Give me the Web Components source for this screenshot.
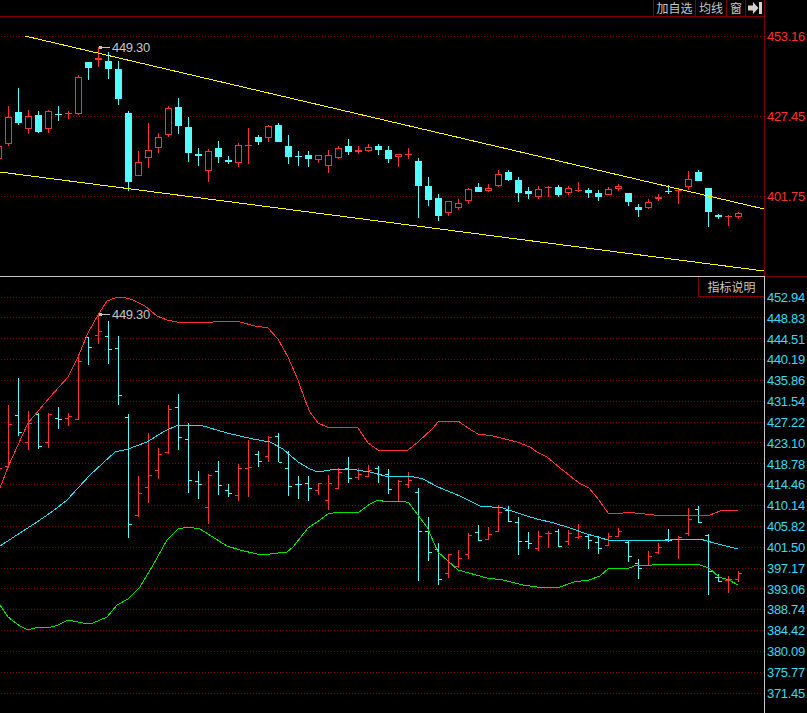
<!DOCTYPE html>
<html>
<head>
<meta charset="utf-8">
<title>K线</title>
<style>
  html, body { margin: 0; background: #000; }
</style>
</head>
<body>
<kline-window>
  <candle-pane slot="upper"></candle-pane>
  <price-axis slot="upper-axis" tone="red" top="28" gap="64" values="453.16 427.45 401.75"></price-axis>
  <bar-pane slot="lower"></bar-pane>
  <price-axis slot="lower-axis" tone="cyan" top="12.5" gap="4.84" values="452.94 448.83 444.51 440.19 435.86 431.54 427.22 423.10 418.78 414.46 410.14 405.82 401.50 397.17 393.06 388.74 384.42 380.09 375.77 371.45"></price-axis>
</kline-window>

<script>
const RED = '#ff3232';
const CYAN = '#54fcfc';
const GRID = '#800000';
const SVG_NS = 'http://www.w3.org/2000/svg';

// c: x centre, color, high, low, body top, body bottom (page pixels)
const CANDLES = [
  [-2,'r',140,165,146,159],[8,'r',106,146,117,144],[18,'c',88,125,112,123],[28,'r',110,134,116,129],
  [38,'c',111,133,115,132],[48,'r',110,133,111,129],[58,'c',106,121,114,115],[68,'r',111,119,113,114],
  [78,'r',75,115,77,114],[88,'c',62,80,62,68],[98,'r',47,67,58,60],[108,'c',52,79,61,69],
  [118,'c',61,105,69,99],[128,'c',111,191,113,182],[138,'r',151,176,162,176],[148,'r',123,168,150,158],
  [158,'r',133,153,137,148],[168,'r',106,137,108,135],[178,'c',98,134,107,126],[188,'c',117,162,127,153],
  [198,'c',148,166,154,156],[208,'r',149,182,151,171],[218,'c',141,163,148,157],[228,'c',156,164,160,162],
  [238,'r',143,167,145,163],[248,'r',128,164,145,146],[258,'c',135,145,137,142],[268,'r',125,142,126,138],
  [278,'c',123,142,125,142],[288,'c',135,164,146,157],[298,'c',151,166,156,157],[308,'c',151,167,155,159],
  [318,'r',155,163,155,160],[328,'r',150,173,155,166],[338,'r',146,159,148,158],[348,'c',139,155,146,152],
  [358,'r',146,154,150,152],[368,'r',144,152,147,151],[378,'c',144,155,146,150],[388,'c',146,163,150,159],
  [398,'r',154,167,154,157],[408,'r',148,159,154,155],[418,'c',158,218,161,186],[428,'c',177,206,186,200],
  [438,'c',194,221,198,216],[448,'r',201,216,201,213],[458,'r',199,210,203,208],[468,'r',188,204,189,201],
  [478,'c',183,192,187,192],[488,'r',184,192,188,191],[498,'r',170,187,174,186],[508,'c',170,181,172,180],
  [518,'c',177,202,180,193],[528,'c',187,199,191,194],[538,'r',186,199,189,197],[548,'r',186,197,187,188],
  [558,'c',185,197,187,195],[568,'r',186,195,188,193],[578,'r',182,192,190,191],[588,'c',188,198,190,193],
  [598,'c',190,201,193,197],[608,'r',187,195,189,195],[618,'r',184,191,186,189],[628,'c',193,206,193,202],
  [638,'c',204,217,207,210],[648,'r',199,209,202,208],[658,'r',194,201,197,199],[668,'c',185,194,191,192],
  [678,'r',189,204,190,191],[688,'r',171,190,179,187],[698,'c',170,181,172,181],[708,'c',188,227,188,212],
  [718,'c',214,219,215,217],[728,'r',215,226,216,217],[738,'r',212,219,213,217]
];

// c: x centre, color, high, low, open tick, close tick
const BARS = [
  [-2,'r',440,500,468,468],[8,'r',405,468,466,424],[18,'c',378,436,415,432],[28,'r',411,450,442,423],
  [38,'c',413,449,414,446],[48,'r',413,448,442,414],[58,'c',407,429,418,419],[68,'r',413,426,418,416],
  [78,'r',356,420,419,361],[88,'c',337,365,337,347],[98,'r',314,344,335,331],[108,'c',321,364,336,349],
  [118,'c',336,405,348,395],[128,'c',414,538,417,524],[138,'r',476,517,515,493],[148,'r',433,503,487,475],
  [158,'r',448,479,470,454],[168,'r',405,454,452,409],[178,'c',394,450,407,437],[188,'c',423,493,439,480],
  [198,'c',471,499,481,484],[208,'r',474,524,507,475],[218,'c',461,495,471,485],[228,'c',484,497,490,493],
  [238,'r',464,501,495,468],[248,'r',440,497,468,467],[258,'c',451,467,454,461],[268,'r',436,462,456,437],
  [278,'c',433,462,436,462],[288,'c',451,496,468,486],[298,'c',476,499,484,484],[308,'c',476,501,483,488],
  [318,'r',483,495,490,483],[328,'r',475,510,500,483],[338,'r',468,489,488,472],[348,'c',457,483,468,478],
  [358,'r',468,480,477,474],[368,'r',465,477,476,470],[378,'c',466,483,468,474],[388,'c',469,494,474,489],
  [398,'r',480,501,501,481],[408,'r',472,488,484,480],[418,'c',488,581,492,531],[428,'c',517,561,531,552],
  [438,'c',543,585,549,579],[448,'r',554,578,573,554],[458,'r',550,568,566,558],[468,'r',533,559,554,535],
  [478,'c',525,541,532,540],[488,'r',527,540,539,534],[498,'r',505,532,531,512],[508,'c',506,522,510,521],
  [518,'c',517,555,522,541],[528,'c',532,549,541,543],[538,'r',531,551,548,536],[548,'r',531,548,533,533],
  [558,'c',529,547,531,546],[568,'r',530,545,541,533],[578,'r',524,539,537,536],[588,'c',534,549,536,540],
  [598,'c',536,554,542,548],[608,'r',533,546,545,536],[618,'r',528,537,536,531],[628,'c',541,562,542,556],
  [638,'c',559,579,563,568],[648,'r',551,566,565,556],[658,'r',543,554,552,547],[668,'c',529,542,539,540],
  [678,'r',536,559,539,537],[688,'r',508,536,533,519],[698,'c',506,523,509,522],[708,'c',534,595,535,571],
  [718,'c',574,582,577,581],[728,'r',576,593,580,579],[738,'r',571,582,579,573]
];

const UPPER_BAND = '0,488 8,467 28,423 50,397 68,377 78,357 88,333 98,315 107,301 115,298 123,297 133,300 145,306 157,316 167,320 177,322 213,322 223,321 240,322 255,326 268,328 278,339 288,357 298,380 305,400 310,412 318,423 327,427 358,428 368,443 378,450 408,450 418,442 433,428 438,422 458,421 468,428 478,434 493,436 517,442 530,447 537,452 547,457 560,468 579,483 589,488 599,500 608,513 623,513 629,512 635,513 654,515 680,515 710,515 720,511 729,510 738,511';
const MID_BAND = '0,546 20,533 37,522 53,511 67,500 90,475 115,452 128,449 147,442 163,432 178,425 200,425 227,433 253,439 270,442 283,449 298,462 310,469 318,472 330,470 350,469 370,472 385,476 410,476 423,479 438,487 460,496 480,506 503,508 527,516 537,519 554,523 570,528 587,534 608,540 670,540 700,539 714,543 738,549';
const LOW_BAND = '0,605 8,617 20,626 28,630 38,627 48,628 58,625 68,620 83,623 93,623 107,617 117,605 128,599 140,587 152,567 167,540 178,529 188,527 200,529 227,546 240,550 257,554 270,554 287,552 293,547 308,528 317,522 328,514 338,512 358,513 370,504 378,500 387,502 403,501 409,503 418,515 427,527 438,552 458,570 487,578 503,580 523,585 537,587 560,587 574,582 589,580 600,576 609,568 629,568 637,565 647,566 657,564 684,565 697,564 709,568 719,577 729,580 738,585';

function svgEl(name, attrs, text) {
  const el = document.createElementNS(SVG_NS, name);
  for (const k in attrs) el.setAttribute(k, attrs[k]);
  if (text) el.textContent = text;
  return el;
}

function box(svg, x, y, w, h, fill) {
  svg.appendChild(svgEl('rect', { x, y, width: w, height: h, fill }));
}

function gridLine(svg, y) {
  svg.appendChild(svgEl('line', { x1: 1, y1: y + 0.5, x2: 764, y2: y + 0.5, stroke: GRID, 'stroke-dasharray': '1 2' }));
}

function polyline(svg, points, stroke) {
  svg.appendChild(svgEl('polyline', { points, stroke, fill: 'none' }));
}

// the little arrow + price at the highest point
function peakMark(svg, y) {
  const g = '#c4c4c4';
  box(svg, 100, y, 10, 1, g);
  box(svg, 99, y - 1, 3, 3, g);
  svg.appendChild(svgEl('text', { x: 112, y: y + 5, fill: g }, '449.30'));
}

const paneStyle = `
  <style>
    :host { display: block; width: 764px; height: 100%; position: relative; }
    svg { display: block; width: 764px; height: 100%; shape-rendering: crispEdges; }
    text { font: 13px "Liberation Sans", Arial, sans-serif; letter-spacing: -0.3px; }
  </style>`;

class KlineWindow extends HTMLElement {
  constructor() {
    super();
    this.attachShadow({ mode: 'open' });
    this.shadowRoot.innerHTML = `
      <style>
        :host { display: flex; flex-direction: column; width: 807px; height: 713px; background: #000; overflow: hidden; }
        .upper { display: flex; height: 276px; }
        .upper .main { width: 764px; display: flex; flex-direction: column; }
        .upper .plot { height: 259px; }
        .sep { display: flex; height: 1px; flex: none; background: ${GRID}; }
        .sep i { display: block; width: 765px; background: #c8c8c8; }
        .lower { display: flex; height: 436px; position: relative; }
        .lower .main { width: 764px; }
      </style>
      <div class="upper">
        <div class="main">
          <kline-toolbar></kline-toolbar>
          <div class="plot"><slot name="upper"></slot></div>
        </div>
        <slot name="upper-axis"></slot>
      </div>
      <div class="sep"><i></i></div>
      <div class="lower">
        <div class="main"><slot name="lower"></slot></div>
        <slot name="lower-axis"></slot>
        <legend-button>指标说明</legend-button>
      </div>`;
  }
}

class KlineToolbar extends HTMLElement {
  constructor() {
    super();
    this.attachShadow({ mode: 'open' });
    this.shadowRoot.innerHTML = `
      <style>
        :host { display: flex; justify-content: flex-end; flex: none; height: 16px; border-bottom: 1px solid ${GRID}; }
      </style>
      <tool-button style="width:41px">加自选</tool-button>
      <tool-button style="width:30px">均线</tool-button>
      <tool-button style="width:18px">窗</tool-button>
      <tool-button style="width:18px">
        <svg width="14" height="12" viewBox="0 0 14 12" style="display:block">
          <path d="M0 3.5h5V0l5.5 6L5 12V8.5H0z" fill="#d0d0d0"/>
          <rect x="11" y="0" width="3" height="12" fill="#d0d0d0"/>
        </svg>
      </tool-button>`;
  }
}

class ToolButton extends HTMLElement {
  constructor() {
    super();
    this.attachShadow({ mode: 'open' });
    this.shadowRoot.innerHTML = `
      <style>
        :host {
          display: flex; align-items: center; justify-content: center;
          border-left: 1px solid ${GRID};
          font: 12px/16px "Noto Sans CJK SC", "Liberation Sans", sans-serif;
          color: #c8c8c8; white-space: nowrap;
        }
      </style>
      <slot></slot>`;
  }
}

class LegendButton extends HTMLElement {
  constructor() {
    super();
    this.attachShadow({ mode: 'open' });
    this.shadowRoot.innerHTML = `
      <style>
        :host {
          position: absolute; top: 0; left: 698px; width: 65px; height: 19px;
          display: flex; align-items: center; justify-content: center;
          background: #000;
          border-left: 1px solid ${GRID}; border-bottom: 1px solid ${GRID};
          font: 12px/19px "Noto Sans CJK SC", "Liberation Sans", sans-serif;
          color: #c8c8c8;
        }
      </style>
      <slot></slot>`;
  }
}

class PriceAxis extends HTMLElement {
  constructor() {
    super();
    this.attachShadow({ mode: 'open' });
  }
  connectedCallback() {
    const red = this.getAttribute('tone') === 'red';
    const labels = this.getAttribute('values').split(' ').map(v => `<span>${v}</span>`).join('');
    this.shadowRoot.innerHTML = `
      <style>
        :host {
          display: grid; grid-auto-rows: 16px; row-gap: ${this.getAttribute('gap')}px; align-content: start;
          box-sizing: border-box; width: 43px; height: 100%;
          padding: ${this.getAttribute('top')}px 0 0 2px;
          border-left: 1px solid ${red ? GRID : '#c8c8c8'};
          font: 13px "Liberation Sans", Arial, sans-serif; letter-spacing: -0.3px;
          color: ${red ? RED : '#38dcf4'};
        }
        span { display: flex; align-items: center; }
      </style>${labels}`;
  }
}

class CandlePane extends HTMLElement {
  constructor() {
    super();
    this.attachShadow({ mode: 'open' });
    this.shadowRoot.innerHTML = paneStyle + '<svg viewBox="0 17 764 259"></svg>';
  }
  connectedCallback() {
    const svg = this.shadowRoot.querySelector('svg');
    [36, 116, 196].forEach(y => gridLine(svg, y));
    CANDLES.forEach(([c, color, hi, lo, top, bot]) => {
      const col = color === 'r' ? RED : CYAN;
      const hollow = color === 'r' && bot - top > 2;
      if (hollow) {
        box(svg, c, hi, 1, top - hi, col);
        box(svg, c, bot, 1, lo - bot, col);
        svg.appendChild(svgEl('rect', { x: c - 2.5, y: top + 0.5, width: 6, height: bot - top - 1, fill: '#000', stroke: col }));
      } else {
        box(svg, c, hi, 1, lo - hi, col);
        box(svg, c - 3, top, 7, bot - top, col);
      }
    });
    const yellow = '#ffff00';
    polyline(svg, '25,36 764,209', yellow);
    polyline(svg, '0,172 764,271', yellow);
    peakMark(svg, 47);
  }
}

class BarPane extends HTMLElement {
  constructor() {
    super();
    this.attachShadow({ mode: 'open' });
    this.shadowRoot.innerHTML = paneStyle + '<svg viewBox="0 277 764 436"></svg>';
  }
  connectedCallback() {
    const svg = this.shadowRoot.querySelector('svg');
    [297, 317, 338, 359, 380, 401, 422, 442, 463, 484, 505, 526, 547, 568, 588, 609, 630, 651, 672, 693].forEach(y => gridLine(svg, y));
    BARS.forEach(([c, color, hi, lo, open, close]) => {
      const col = color === 'r' ? RED : CYAN;
      box(svg, c, hi, 1, lo - hi, col);
      box(svg, c - 3, open, 3, 1, col);
      box(svg, c + 1, close, 3, 1, col);
    });
    polyline(svg, UPPER_BAND, RED);
    polyline(svg, MID_BAND, '#20e0f0');
    polyline(svg, LOW_BAND, '#00e600');
    peakMark(svg, 314);
  }
}

customElements.define('kline-window', KlineWindow);
customElements.define('kline-toolbar', KlineToolbar);
customElements.define('tool-button', ToolButton);
customElements.define('legend-button', LegendButton);
customElements.define('price-axis', PriceAxis);
customElements.define('candle-pane', CandlePane);
customElements.define('bar-pane', BarPane);
</script>
</body>
</html>
